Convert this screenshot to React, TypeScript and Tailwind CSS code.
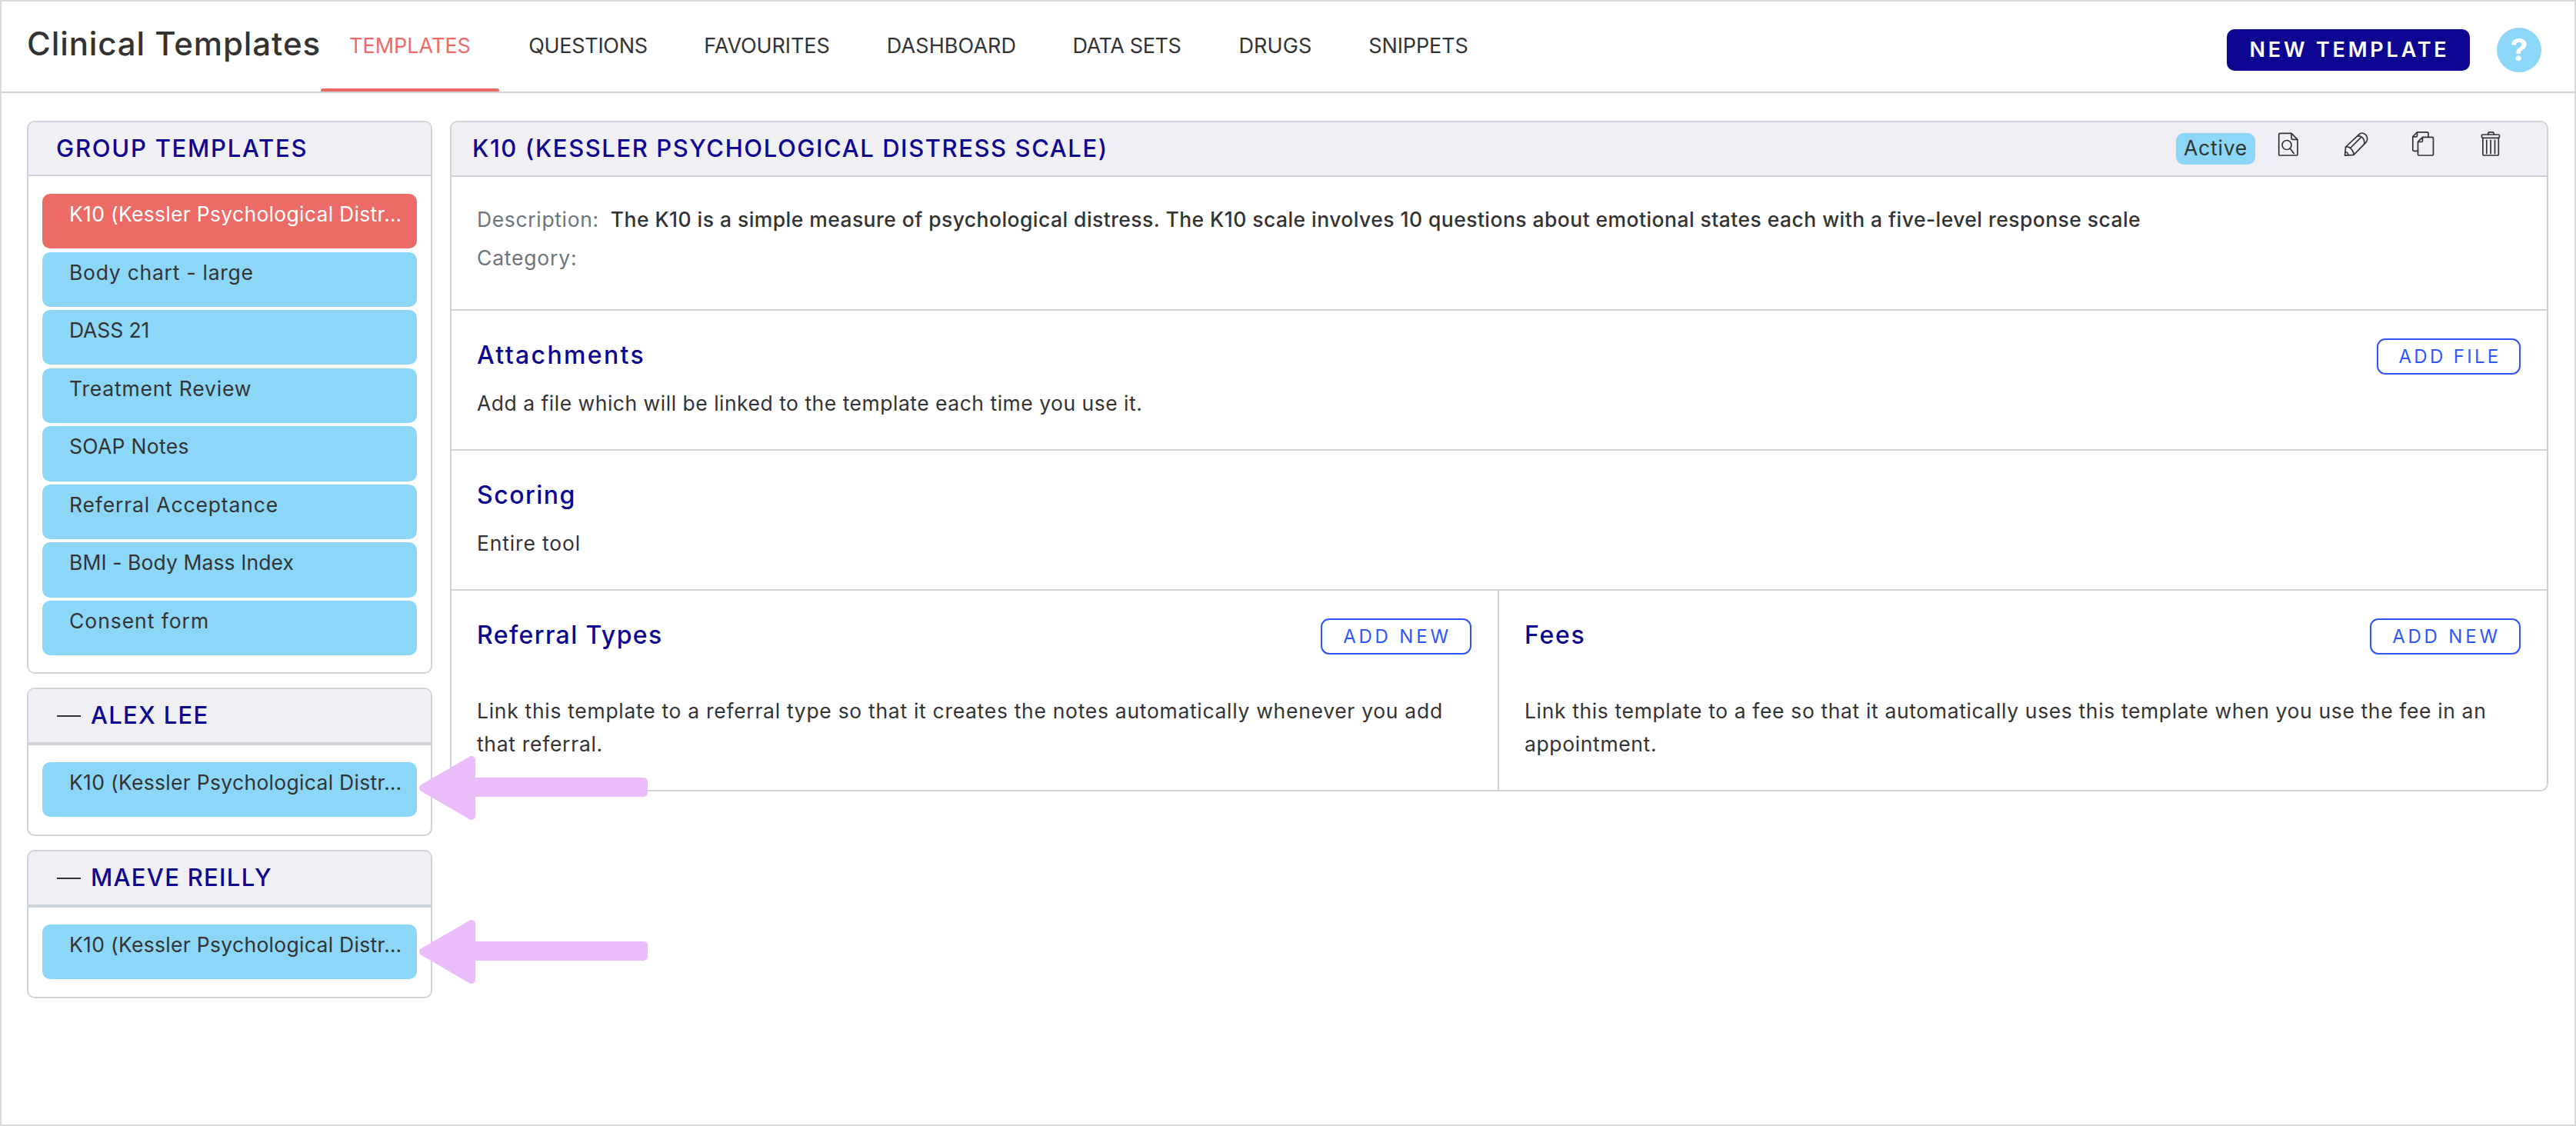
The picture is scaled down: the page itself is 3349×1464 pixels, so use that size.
import type { ReactNode } from "react";
import clsx from "clsx";

const TABS = [
  { label: "TEMPLATES", className: "w-[232px]", active: true },
  { label: "QUESTIONS", className: "w-[228px] pl-[3px] tracking-[-0.3px]" },
  { label: "FAVOURITES", className: "w-[237px] pl-[3px] tracking-[-0.1px]" },
  { label: "DASHBOARD", className: "w-[243px] pl-[3px] tracking-[0.1px]" },
  { label: "DATA SETS", className: "w-[216px] tracking-[-0.4px]" },
  { label: "DRUGS", className: "w-[168px] pl-[2px] tracking-[0.1px]" },
  { label: "SNIPPETS", className: "w-[206px] tracking-[-0.1px]" },
];

// long names are shortened before they reach the list
const K10 = "K10 (Kessler Psychological Distr…";

const GROUP_TEMPLATES = [
  { name: K10, active: true, tracking: "tracking-[0.3px]" },
  { name: "Body chart - large", tracking: "tracking-[0.75px]" },
  { name: "DASS 21", tracking: "tracking-[-0.1px]" },
  { name: "Treatment Review", tracking: "tracking-[0.8px]" },
  { name: "SOAP Notes", tracking: "tracking-[0.3px]" },
  { name: "Referral Acceptance", tracking: "tracking-[0.85px]" },
  { name: "BMI - Body Mass Index", tracking: "tracking-[0.1px]" },
  { name: "Consent form", tracking: "tracking-[0.95px]" },
];

function TemplateItem({ name, active, tracking }: { name: string; active?: boolean; tracking: string }) {
  return (
    <li
      className={clsx(
        "h-[71.2px] rounded-[10px] pl-[35px] pt-[5px]",
        active ? "bg-[#ed6b66] text-white" : "bg-[#8cd7f8]"
      )}
    >
      <span className={clsx("block whitespace-nowrap leading-[43px]", tracking)}>{name}</span>
    </li>
  );
}

function PersonPanel({ name }: { name: string }) {
  return (
    <section className="h-[193px] rounded-[10px] border-2 border-[#cfd4da]">
      <h2 className="flex h-[73px] items-center rounded-t-[8px] border-b-4 border-[#cfd4da] bg-[#f0eff4] pl-[37px] text-[31px] font-medium tracking-[1.3px] text-[#0d0592]">
        <span className="mr-[13px] h-[2px] w-[31px] bg-[#333]" />
        {name}
      </h2>
      <ul className="px-[18px] pt-[22px]">
        <TemplateItem name={K10} tracking="tracking-[0.3px]" />
      </ul>
    </section>
  );
}

function OutlineButton({ children, className }: { children: ReactNode; className: string }) {
  return (
    <button
      className={clsx(
        "flex h-[47px] shrink-0 items-center justify-center rounded-[11px] border-2 border-[#2f55ff] pl-[3px] text-[24px] text-[#2f55ff]",
        className
      )}
    >
      {children}
    </button>
  );
}

function Icon({ children }: { children: ReactNode }) {
  return (
    <svg
      width="32"
      height="32"
      viewBox="0 0 32 32"
      fill="none"
      stroke="#333"
      strokeWidth="1.7"
      strokeLinejoin="round"
      strokeLinecap="round"
      className="overflow-visible"
    >
      {children}
    </svg>
  );
}

function Arrow({ className }: { className: string }) {
  return (
    <svg width="297" height="83" viewBox="0 0 297 83" fill="#ebbcfa" className={clsx("absolute", className)}>
      <path d="M5 41.5 L68 5 V78 Z" stroke="#ebbcfa" strokeWidth="10" strokeLinejoin="round" />
      <rect x="60" y="28" width="237" height="25" rx="5" />
    </svg>
  );
}

export default function App() {
  return (
    <div className="relative h-[1464px] w-[3349px] border-2 border-[#d9d9d9] bg-white font-[Inter,sans-serif] text-[26.5px] text-[#333]">
      <header className="flex h-[119px] border-b-2 border-[#cfd4da] pl-[33px]">
        <h1 className="w-[382px] whitespace-nowrap pt-[30px] text-[42px] font-medium leading-[50px] tracking-[0.9px]">
          Clinical Templates
        </h1>
        <nav className="flex text-[27px]">
          {TABS.map((tab) => (
            <a
              key={tab.label}
              className={clsx(
                "flex h-[117px] flex-col items-center justify-between pt-[37px] leading-[42px]",
                tab.active && "text-[#ed6b66]",
                tab.className
              )}
            >
              {tab.label}
              {tab.active && <span className="h-1 w-full rounded-t-[3px] bg-[#ed6b66]" />}
            </a>
          ))}
        </nav>
        <button className="ml-auto mt-[36px] h-[54px] w-[316px] rounded-[10px] bg-[#0d0592] pl-[3px] text-[27px] font-semibold tracking-[3.8px] text-white">
          NEW TEMPLATE
        </button>
        <button className="ml-[35px] mr-[43px] mt-[34px] size-[58px] rounded-full bg-[#8cd7f8] text-[40px] font-bold leading-[58px] text-white">
          ?
        </button>
      </header>

      <main className="flex items-start gap-[23px] pl-[33px] pr-[34px] pt-[36px]">
        <aside className="flex w-[527px] shrink-0 flex-col gap-[18px]">
          <section className="h-[719px] rounded-[10px] border-2 border-[#cfd4da]">
            <h2 className="flex h-[70px] items-center rounded-t-[8px] border-b-2 border-[#cfd4da] bg-[#f0eff4] pl-[36px] text-[31px] font-medium tracking-[1.75px] text-[#0d0592]">
              GROUP TEMPLATES
            </h2>
            <ul className="flex flex-col gap-[4.4px] px-[18px] pt-[23px]">
              {GROUP_TEMPLATES.map((t) => (
                <TemplateItem key={t.name} {...t} />
              ))}
            </ul>
          </section>
          <PersonPanel name="ALEX LEE" />
          <PersonPanel name="MAEVE REILLY" />
        </aside>

        <section className="h-[872px] flex-1 rounded-[10px] border-2 border-[#cfd4da]">
          <div className="flex h-[71px] rounded-t-[8px] border-b-2 border-[#cfd4da] bg-[#f0eff4] pl-[27px] pr-[56px]">
            <h2 className="flex-1 text-[31px] font-medium leading-[68px] tracking-[1.58px] text-[#0d0592]">
              K10 (KESSLER PSYCHOLOGICAL DISTRESS SCALE)
            </h2>
            <span className="mr-[27px] mt-[14px] h-[41px] w-[103px] rounded-[10px] bg-[#8cd7f8] text-center leading-[38px] tracking-[0.8px]">
              Active
            </span>
            <div className="flex gap-[56px] pt-[12px]">
              <Icon>
                <path d="M20 2.3H5.2a1.5 1.5 0 0 0-1.5 1.5v25.7A1.5 1.5 0 0 0 5.2 31h21.3a1.5 1.5 0 0 0 1.5-1.5V10.3zM20 2.3v6.5a1.5 1.5 0 0 0 1.5 1.5H28" />
                <circle cx="14" cy="17.5" r="6" />
                <path d="M18.3 21.9l4.9 6.6" />
              </Icon>
              <Icon>
                <path d="M1.5 31.2L2.6 20 19.8 3.8C22.5 1.2 26 1.8 28.5 4.2s3 7 .4 10L13 30.3z" />
                <path d="M2.6 20c2.6-.2 4.7.4 6 1.5M13 30.3c.1-2.7-1-5.500-4.400-8.800L22 8.200M2 26.500c2.300.2 3.700 1.900 4 4.200M17.500 6c5.500-.9 9.800 2.600 9.300 10" />
              </Icon>
              <Icon>
                <path d="M8.5 25.3H3.300a1.500 1.500 0 0 1-1.500-1.500V6.500L7.500.8H20.500A1.500 1.500 0 0 1 22 2.300v5M1.800 6.800h4.200a1.500 1.500 0 0 0 1.500-1.500V.8" />
                <path d="M14.500 7.300H27a1.500 1.500 0 0 1 1.500 1.500v20.700A1.500 1.500 0 0 1 27 31H10a1.500 1.500 0 0 1-1.500-1.500V13.300zM8.500 13.500h4.500a1.500 1.500 0 0 0 1.500-1.500V7.300" />
              </Icon>
              <Icon>
                <rect x="3.500" y="4" width="23" height="4.300" rx="1.200" />
                <path d="M11.700 4c0-2.300.5-3.200 1.800-3.200h4c1.300 0 1.800.9 1.800 3.200M4.900 8.300v21.200A1.500 1.500 0 0 0 6.400 31h17.400a1.500 1.500 0 0 0 1.500-1.500V8.300M9.800 11.300v17.300M15.100 11.300v17.300M20.500 11.300v17.300" />
              </Icon>
            </div>
          </div>

          <div className="h-[174px] border-b-2 border-[#cfd4da] px-[33px] pt-[34px] leading-[43px]">
            <p className="whitespace-nowrap">
              <span className="mr-[15px] tracking-[0.65px] text-[#6c757d]">Description:</span>
              <span className="font-medium tracking-[0.44px]">
                The K10 is a simple measure of psychological distress. The K10 scale involves 10 questions about
                emotional states each with a five-level response scale
              </span>
            </p>
            <p className="mt-[7px] tracking-[0.8px] text-[#6c757d]">Category:</p>
          </div>

          <div className="flex h-[182px] justify-between border-b-2 border-[#cfd4da] pl-[33px] pr-[34px] pt-[36px]">
            <div>
              <h3 className="mt-[1px] text-[32px] font-medium leading-[42px] tracking-[2.35px] text-[#0d0592]">
                Attachments
              </h3>
              <p className="mt-[20px] leading-[43px] tracking-[0.5px]">
                Add a file which will be linked to the template each time you use it.
              </p>
            </div>
            <OutlineButton className="w-[187px] tracking-[3.3px]">ADD FILE</OutlineButton>
          </div>

          <div className="h-[182px] border-b-2 border-[#cfd4da] px-[33px] pt-[37px]">
            <h3 className="text-[32px] font-medium leading-[42px] tracking-[1.5px] text-[#0d0592]">Scoring</h3>
            <p className="mt-[20px] leading-[43px] tracking-[0.85px]">Entire tool</p>
          </div>

          <div className="flex h-[259px]">
            <div className="w-[1362px] border-r-2 border-[#cfd4da] pl-[33px] pr-[34px] pt-[36px]">
              <div className="flex justify-between">
                <h3 className="mt-[1px] text-[32px] font-medium leading-[42px] tracking-[1.4px] text-[#0d0592]">
                  Referral Types
                </h3>
                <OutlineButton className="w-[196px] tracking-[3.8px]">ADD NEW</OutlineButton>
              </div>
              <p className="mt-[52px] leading-[43px] tracking-[0.7px]">
                Link this template to a referral type so that it creates the notes automatically whenever you add
                <br />
                that referral.
              </p>
            </div>
            <div className="flex-1 pl-[33px] pr-[34px] pt-[36px]">
              <div className="flex justify-between">
                <h3 className="mt-[1px] text-[32px] font-medium leading-[42px] tracking-[1.7px] text-[#0d0592]">
                  Fees
                </h3>
                <OutlineButton className="w-[196px] tracking-[3.8px]">ADD NEW</OutlineButton>
              </div>
              <p className="mt-[52px] leading-[43px] tracking-[0.63px]">
                Link this template to a fee so that it automatically uses this template when you use the fee in an
                <br />
                appointment.
              </p>
            </div>
          </div>
        </section>
      </main>

      <Arrow className="left-[543px] top-[981px]" />
      <Arrow className="left-[543px] top-[1194px]" />
    </div>
  );
}
